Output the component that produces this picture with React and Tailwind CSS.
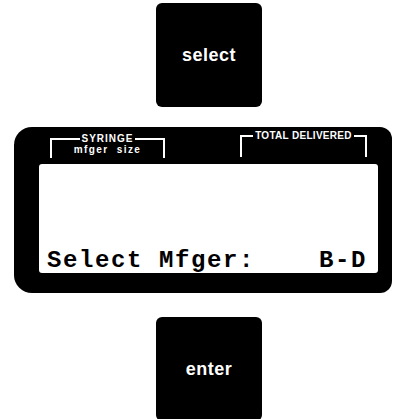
export default function App() {
    const sans = { fontFamily: '"Liberation Sans", Arial, sans-serif' };
    const mono = { fontFamily: '"Liberation Mono", "Courier New", monospace' };

    return (
        <div className="w-[393px] h-[419px] overflow-hidden bg-white flex flex-col items-start" style={sans}>
            {/* select key */}
            <div className="mt-[3px] ml-[156px] w-[106px] h-[104px] shrink-0 rounded-[6px] bg-black flex items-center justify-center">
                <span className="text-white text-[18px] font-bold tracking-[0.5px]">select</span>
            </div>

            {/* display panel */}
            <div className="mt-[20px] ml-[14px] w-[378px] h-[166px] shrink-0 rounded-l-[18px] rounded-r-[12px] bg-black flex flex-col pt-[8px]">
                <div className="h-[29px] flex items-start">
                    <div className="relative ml-[36px] mt-[3px] w-[115px] h-[20px] border-t-2 border-x-2 border-white">
                        <div className="absolute -top-[7px] left-0 right-0 flex justify-center">
                            <span className="bg-black px-[1px] text-white text-[10px] leading-[12px] font-bold tracking-[1px]">SYRINGE</span>
                        </div>
                        <div className="mt-[5px] text-center text-white text-[10px] leading-[10px] font-bold tracking-[1.4px] whitespace-pre">mfger  size</div>
                    </div>
                    <div className="relative ml-[75px] w-[127px] h-[22px] border-t-2 border-x-2 border-white">
                        <div className="absolute -top-[7px] left-0 right-0 flex justify-center">
                            <span className="bg-black px-[2px] text-white text-[10px] leading-[12px] font-bold tracking-[0.3px]">TOTAL DELIVERED</span>
                        </div>
                    </div>
                </div>
                <div className="ml-[25px] w-[339px] h-[109px] rounded-[3px] bg-white flex items-end pl-[8px]">
                    <span className="text-black text-[24px] leading-none font-bold tracking-[1.6px] whitespace-pre" style={mono}>
                        Select Mfger:    B-D
                    </span>
                </div>
            </div>

            {/* enter key */}
            <div className="mt-[24px] ml-[156px] w-[106px] h-[104px] shrink-0 rounded-[6px] bg-black flex items-center justify-center">
                <span className="text-white text-[18px] font-bold tracking-[0.5px]">enter</span>
            </div>
        </div>
    );
}
